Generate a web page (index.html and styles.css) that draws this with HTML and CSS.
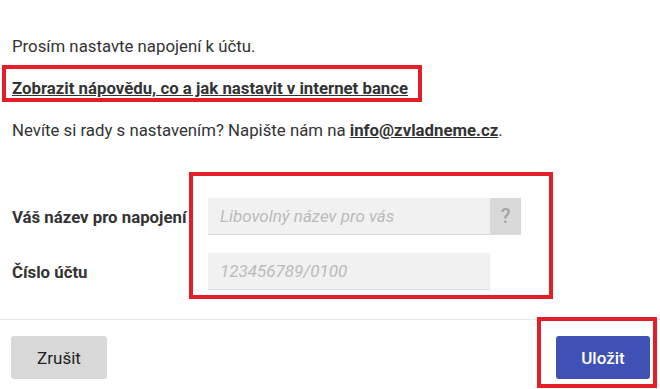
FILE: index.html
```html
<!DOCTYPE html>
<html lang="cs">
<head>
<meta charset="utf-8">
<link rel="stylesheet" href="styles.css">
</head>
<body>
<div class="page">
  <div class="intro">
    <p class="line">Prosím nastavte napojení k účtu.</p>
    <p class="line"><a class="help" href="#">Zobrazit nápovědu, co a jak nastavit v internet bance</a></p>
    <p class="line">Nevíte si rady s nastavením? Napište nám na <a class="mail" href="#">info@zvladneme.cz</a>.</p>
  </div>
  <div class="form">
    <div class="row">
      <label class="label">Váš název pro napojení</label>
      <div class="group">
        <input class="input" type="text" placeholder="Libovolný název pro vás">
        <span class="addon">?</span>
      </div>
    </div>
    <div class="row">
      <label class="label">Číslo účtu</label>
      <div class="group">
        <input class="input" type="text" placeholder="123456789/0100">
      </div>
    </div>
  </div>
  <div class="footer">
    <button class="btn btn-cancel">Zrušit</button>
    <button class="btn btn-save">Uložit</button>
  </div>
  <div class="mark mark-link"></div>
  <div class="mark mark-form"></div>
  <div class="mark mark-save"></div>
</div>
</body>
</html>
```
FILE: styles.css
```css
* { box-sizing: border-box; }
html, body { margin: 0; padding: 0; background: #fff; }
body {
  font-family: Roboto, "Noto Sans", sans-serif;
  color: #333;
  font-size: 16.8px;
}
.page {
  position: relative;
  width: 660px;
  height: 389px;
  overflow: hidden;
}
.intro {
  padding: 36px 12px 0;
  display: flex;
  flex-direction: column;
  gap: 22px;
}
.line {
  margin: 0;
  line-height: 20px;
}
.help, .mail {
  color: #333;
  font-weight: 700;
  text-decoration: underline;
}
.form {
  padding: 58px 0 0 12px;
  display: flex;
  flex-direction: column;
  gap: 18px;
}
.row {
  display: flex;
  align-items: center;
}
.label {
  width: 196px;
  font-weight: 700;
  font-size: 16.8px;
}
.group {
  display: flex;
}
.input {
  width: 282px;
  height: 37px;
  border: none;
  border-bottom: 1px solid #dcdcdc;
  background: #f1f1f1;
  padding: 0 12px;
  font-family: Roboto, sans-serif;
  font-size: 17px;
  outline: none;
}
.input::placeholder {
  color: #bbb;
  font-style: italic;
}
.addon {
  width: 31px;
  height: 37px;
  background: #d9d9d9;
  border-bottom: 1px solid #dcdcdc;
  color: #a4a4a4;
  font-weight: 500;
  font-size: 20px;
  display: flex;
  align-items: center;
  justify-content: center;
}
.footer {
  margin-top: 29px;
  border-top: 1px solid #e6e6e6;
  padding: 16px 10px 0 11px;
  display: flex;
  justify-content: space-between;
}
.btn {
  height: 43px;
  border: none;
  border-radius: 3px;
  font-family: Roboto, sans-serif;
  font-size: 17px;
}
.btn-cancel {
  width: 96px;
  background: #d8d8d8;
  color: #222;
}
.btn-save {
  width: 94px;
  background: #3f51b5;
  color: #fff;
  font-weight: 500;
}
.mark {
  position: absolute;
  border: 4px solid #e41e26;
}
.mark-link { left: 2px; top: 65px; width: 420px; height: 37px; }
.mark-form { left: 189px; top: 172px; width: 364px; height: 127px; }
.mark-save { left: 537px; top: 317px; width: 120px; height: 71px; }
```
